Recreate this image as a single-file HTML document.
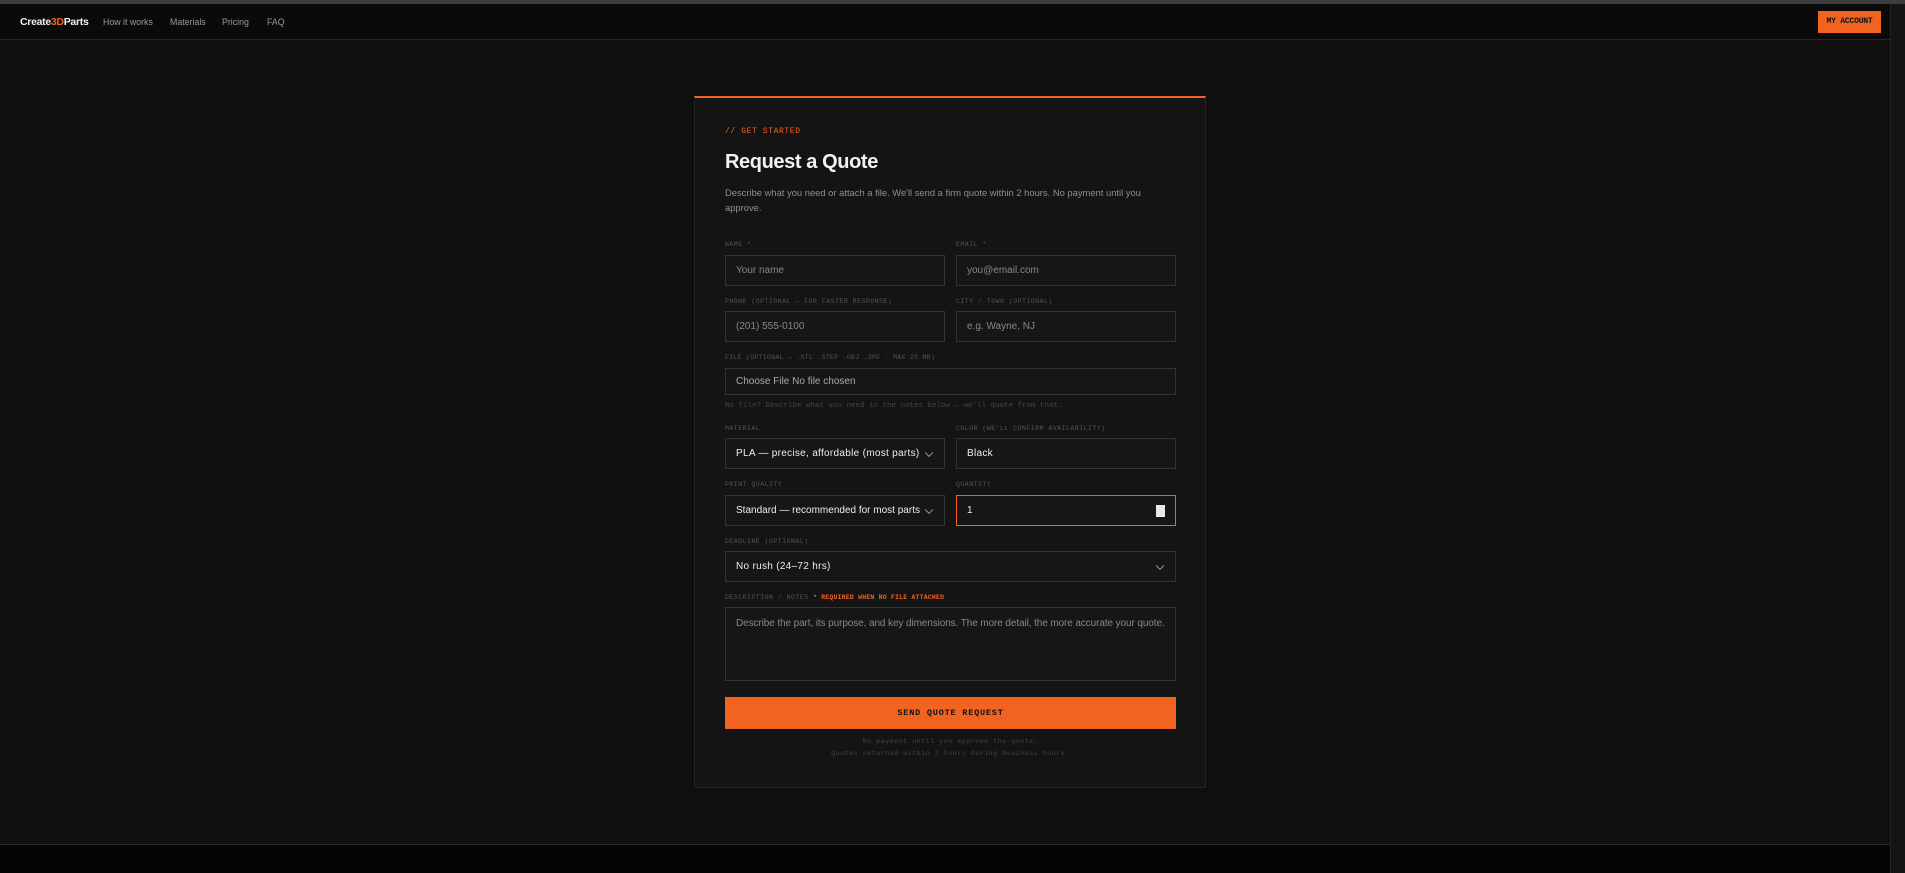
<!DOCTYPE html>
<html><head><meta charset="utf-8"><style>
*{box-sizing:border-box;margin:0;padding:0}
body{width:1905px;height:873px;background:#0f0f0f;font-family:"Liberation Sans",sans-serif;position:relative;overflow:hidden;color:#ddd}
.top{position:absolute;left:0;top:0;width:1905px;height:4px;background:#3c3c3c}
nav{position:absolute;left:0;top:4px;width:1890px;height:36px;background:#0a0a0a;border-bottom:1px solid #262626}
.logo{position:absolute;left:20px;top:12px;font-weight:bold;font-size:10.5px;color:#f0f0f0;letter-spacing:-0.3px}
.logo span{color:#f26322}
.nl{position:absolute;top:13px;font-size:8.8px;color:#999}
.acct{position:absolute;left:1818px;top:7px;width:63px;height:22px;background:#f26322;color:#111;font-family:"Liberation Mono",monospace;font-size:8px;font-weight:bold;text-align:center;line-height:22px;letter-spacing:-0.2px}
.sb{position:absolute;left:1890px;top:4px;width:15px;height:869px;background:#141414;border-left:1px solid #222}
.foot{position:absolute;left:0;top:844px;width:1890px;height:29px;background:#050505;border-top:1px solid #2a2a2a}
.card{position:absolute;left:694px;top:96px;width:512px;height:692px;background:#141414;border:1px solid #222;border-top:2px solid #f26322}
.a{position:absolute}
.lab{position:absolute;font-family:"Liberation Mono",monospace;font-size:6.5px;color:#555;letter-spacing:0.5px;text-transform:uppercase}
.in{position:absolute;background:#161616;border:1px solid #333;font-size:10px;color:#888;padding-left:10px;display:flex;align-items:center}
.w{color:#eee;font-size:10px;letter-spacing:0.3px}
.chev{position:absolute;right:12px;top:50%;width:6px;height:6px;border-right:1px solid #999;border-bottom:1px solid #999;transform:translateY(-70%) rotate(45deg)}
</style></head><body>
<div class="top"></div>
<nav>
<div class="logo">Create<span>3D</span>Parts</div>
<div class="nl" style="left:103px">How it works</div>
<div class="nl" style="left:170px">Materials</div>
<div class="nl" style="left:222px">Pricing</div>
<div class="nl" style="left:267px">FAQ</div>
<div class="acct">MY ACCOUNT</div>
</nav>
<div class="sb"></div>
<div class="foot"></div>
<div class="card"></div>
<div class="a" style="left:725px;top:127px;font-family:'Liberation Mono',monospace;font-size:8px;color:#f26322;letter-spacing:0.6px">// GET STARTED</div>
<div class="a" style="left:725px;top:151px;font-size:20px;font-weight:bold;color:#f2f2f2;letter-spacing:-0.4px">Request a Quote</div>
<div class="a" style="left:725px;top:185px;width:440px;font-size:9.4px;line-height:15px;color:#8a8f98">Describe what you need or attach a file. We'll send a firm quote within 2 hours. No payment until you approve.</div>

<div class="lab" style="left:725px;top:241px">Name *</div>
<div class="lab" style="left:956px;top:241px">Email *</div>
<div class="in" style="left:725px;top:255px;width:220px;height:31px">Your name</div>
<div class="in" style="left:956px;top:255px;width:220px;height:31px">you@email.com</div>

<div class="lab" style="left:725px;top:298px">Phone (optional — for faster response)</div>
<div class="lab" style="left:956px;top:298px">City / Town (optional)</div>
<div class="in" style="left:725px;top:311px;width:220px;height:31px">(201) 555-0100</div>
<div class="in" style="left:956px;top:311px;width:220px;height:31px">e.g. Wayne, NJ</div>

<div class="lab" style="left:725px;top:354px;letter-spacing:0.3px">File (optional — .STL .STEP .OBJ .3MF · max 25 MB)</div>
<div class="in" style="left:725px;top:368px;width:451px;height:27px;color:#aaa">Choose File No file chosen</div>
<div class="a" style="left:725px;top:402px;font-family:'Liberation Mono',monospace;font-size:7.5px;color:#444">No file? Describe what you need in the notes below — we'll quote from that.</div>

<div class="lab" style="left:725px;top:425px">Material</div>
<div class="lab" style="left:956px;top:425px">Color (we'll confirm availability)</div>
<div class="in w" style="left:725px;top:438px;width:220px;height:31px">PLA — precise, affordable (most parts)<span class="chev"></span></div>
<div class="in w" style="left:956px;top:438px;width:220px;height:31px">Black</div>

<div class="lab" style="left:725px;top:481px">Print quality</div>
<div class="lab" style="left:956px;top:481px">Quantity</div>
<div class="in w" style="left:725px;top:495px;width:220px;height:31px;letter-spacing:0">Standard — recommended for most parts<span class="chev"></span></div>
<div class="in w" style="left:956px;top:495px;width:220px;height:31px;border-color:#f26322">1<span style="position:absolute;right:10px;top:9px;width:9px;height:12px;background:#e8e8e8"></span></div>

<div class="lab" style="left:725px;top:538px">Deadline (optional)</div>
<div class="in w" style="left:725px;top:551px;width:451px;height:31px">No rush (24–72 hrs)<span class="chev"></span></div>

<div class="lab" style="left:725px;top:594px">Description / Notes <span style="color:#f26322;font-weight:bold;letter-spacing:0.2px">* Required when no file attached</span></div>
<div class="in" style="left:725px;top:607px;width:451px;height:74px;align-items:flex-start;padding-top:10px;letter-spacing:-0.1px">Describe the part, its purpose, and key dimensions. The more detail, the more accurate your quote.</div>

<div class="a" style="left:725px;top:697px;width:451px;height:32px;background:#f26322;color:#111;font-family:'Liberation Mono',monospace;font-weight:bold;font-size:8.5px;letter-spacing:0.8px;text-align:center;line-height:32px">SEND QUOTE REQUEST</div>
<div class="a" style="left:725px;top:736px;width:451px;text-align:center;font-family:'Liberation Mono',monospace;font-size:6.5px;color:#444;line-height:12px;letter-spacing:0.6px">No payment until you approve the quote.<br>Quotes returned within 2 hours during business hours.</div>
</body></html>
